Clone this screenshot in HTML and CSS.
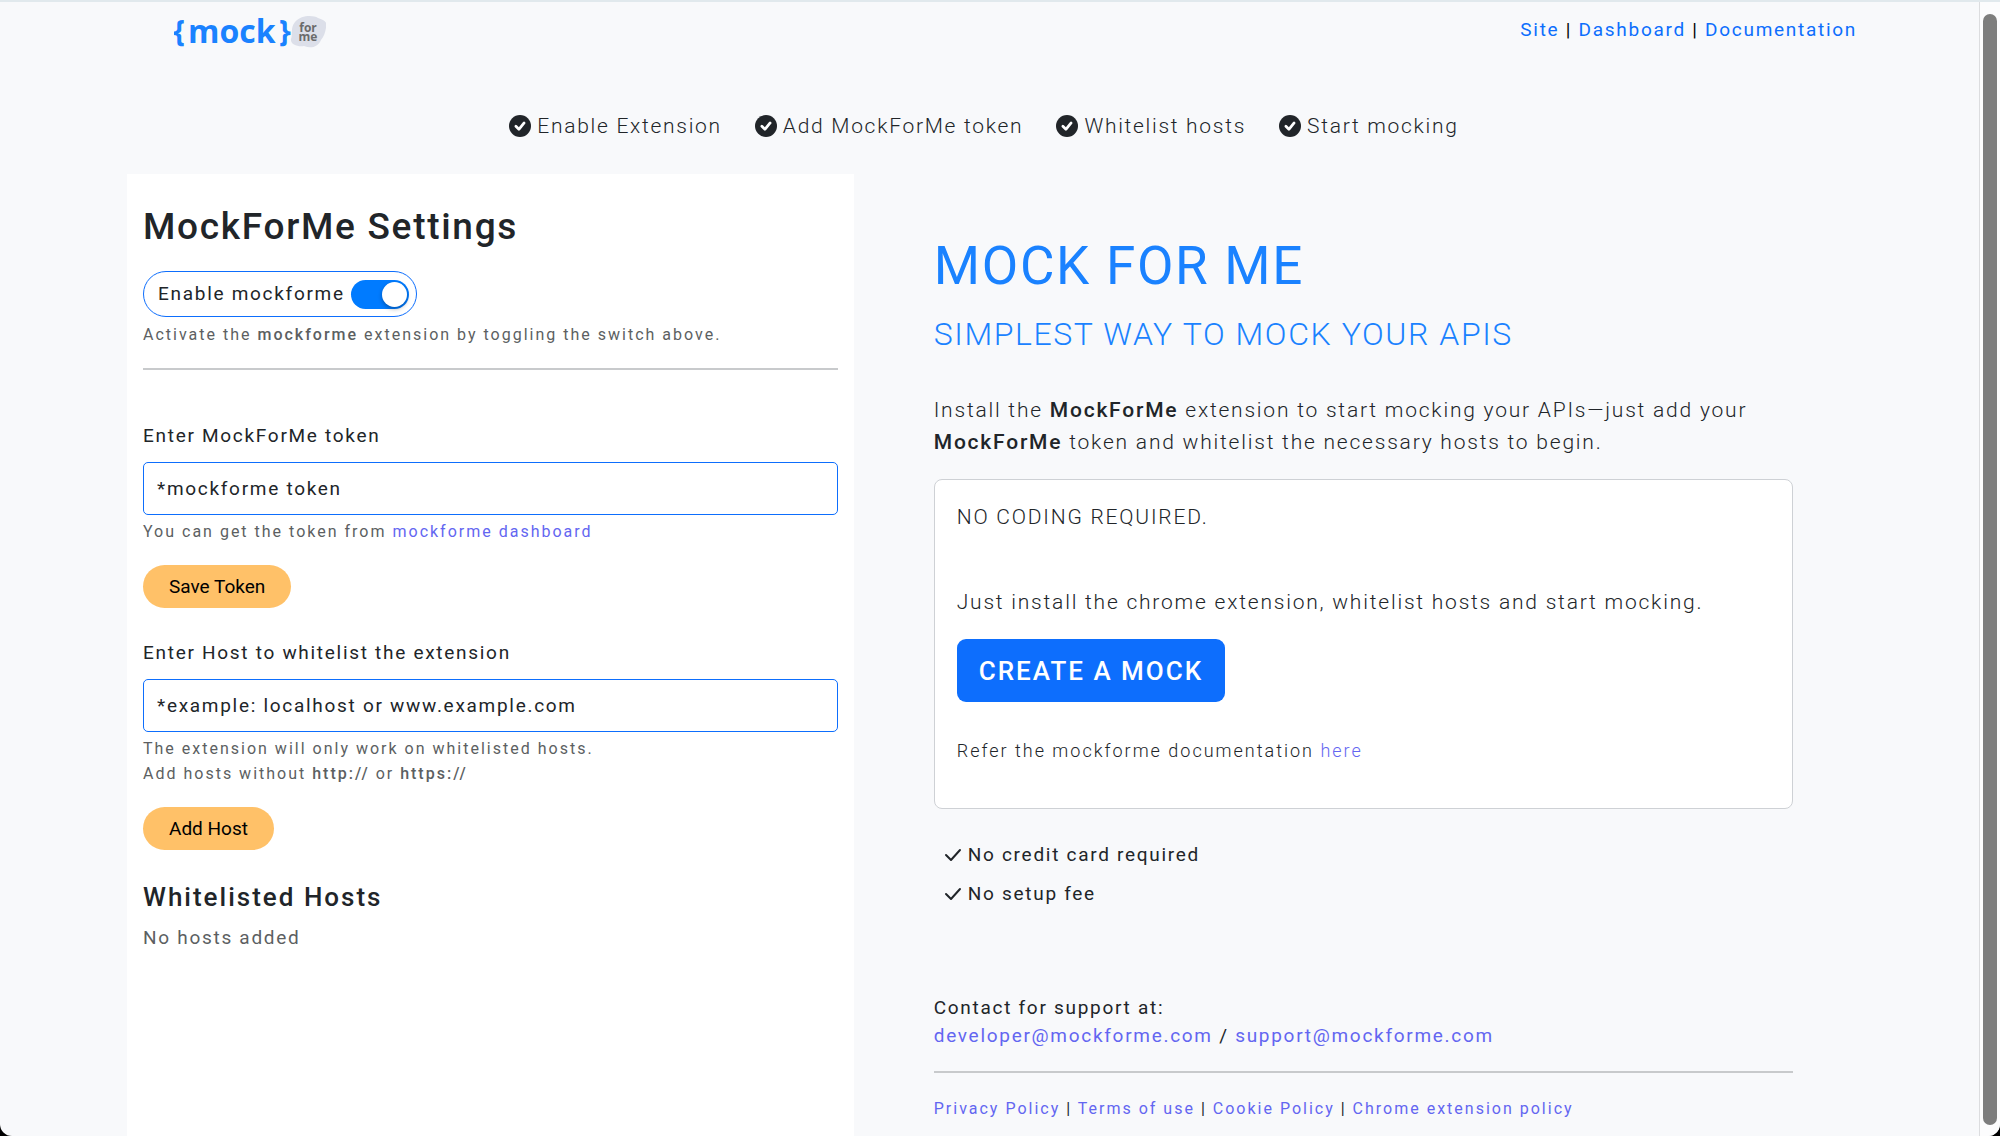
FILE: index.html
```html
<!DOCTYPE html>
<html lang="en">

<head>
    <meta charset="UTF-8">
    <meta name="viewport" content="width=device-width, initial-scale=1.0">
    <title>MockForMe</title>
    <link rel="stylesheet" href="styles.css">
</head>

<body>
    <div class="page">
        <header class="header">
            <a class="logo" href="#" aria-label="mock for me">
                <svg width="152" height="48" viewBox="0 -8 152 48">
                    <g class="logo-main">
                        <text x="-1" y="26">{</text>
                        <text class="logo-name" x="14" y="27">mock</text>
                        <text x="105" y="26">}</text>
                    </g>
                    <path class="logo-blob" d="M121 6C127 -1 139 -1 144 2C150 4 154 6 152 12C151 17 150 20 147 24C144 31 137 33 130 30C123 31 116 28 117 23C119 18 116 12 121 6Z" />
                    <g class="logo-small">
                        <text x="134" y="16">for</text>
                        <text x="134" y="25">me</text>
                    </g>
                </svg>
            </a>
            <nav class="nav">
                <a href="#">Site</a> | <a href="#">Dashboard</a> | <a href="#">Documentation</a>
            </nav>
        </header>

        <ul class="steps">
            <li><svg class="dot" viewBox="0 0 16 16"><circle cx="8" cy="8" r="8" /><path d="M5 8.2L7.2 10.4L11 5.8" /></svg>Enable Extension</li>
            <li><svg class="dot" viewBox="0 0 16 16"><circle cx="8" cy="8" r="8" /><path d="M5 8.2L7.2 10.4L11 5.8" /></svg>Add MockForMe token</li>
            <li><svg class="dot" viewBox="0 0 16 16"><circle cx="8" cy="8" r="8" /><path d="M5 8.2L7.2 10.4L11 5.8" /></svg>Whitelist hosts</li>
            <li><svg class="dot" viewBox="0 0 16 16"><circle cx="8" cy="8" r="8" /><path d="M5 8.2L7.2 10.4L11 5.8" /></svg>Start mocking</li>
        </ul>

        <main class="row">
            <section class="settings">
                <h1>MockForMe Settings</h1>
                <div class="switch">
                    <label for="enable">Enable mockforme</label>
                    <input type="checkbox" id="enable" checked>
                </div>
                <p class="help">Activate the <b>mockforme</b> extension by toggling the switch above.</p>
                <hr>

                <form class="form">
                    <label for="token">Enter MockForMe token</label>
                    <input type="text" id="token" placeholder="*mockforme token">
                    <p class="help">You can get the token from <a href="#">mockforme dashboard</a></p>
                    <button type="button" class="btn">Save Token</button>
                </form>

                <form class="form">
                    <label for="host">Enter Host to whitelist the extension</label>
                    <input type="text" id="host" placeholder="*example: localhost or www.example.com">
                    <p class="help">The extension will only work on whitelisted hosts.<br>Add hosts without <b>http://</b> or <b>https://</b></p>
                    <button type="button" class="btn">Add Host</button>
                </form>

                <h3>Whitelisted Hosts</h3>
                <p class="empty">No hosts added</p>
            </section>

            <section class="intro">
                <h1>MOCK FOR ME</h1>
                <h2>SIMPLEST WAY TO MOCK YOUR APIS</h2>
                <p class="lead">Install the <b>MockForMe</b> extension to start mocking your APIs—just add your <b>MockForMe</b> token and whitelist the necessary hosts to begin.</p>

                <div class="card">
                    <p class="lead">NO CODING REQUIRED.</p>
                    <p class="lead install">Just install the chrome extension, whitelist hosts and start mocking.</p>
                    <button type="button" class="create">CREATE A MOCK</button>
                    <p class="refer">Refer the mockforme documentation <a href="#">here</a></p>
                </div>

                <ul class="perks">
                    <li><svg class="tick" viewBox="0 0 18 14"><path d="M2 7L7 12L16 2" /></svg>No credit card required</li>
                    <li><svg class="tick" viewBox="0 0 18 14"><path d="M2 7L7 12L16 2" /></svg>No setup fee</li>
                </ul>

                <p class="contact">Contact for support at:<br>
                    <a href="#">developer@mockforme.com</a> / <a href="#">support@mockforme.com</a></p>
                <hr>
                <footer class="footer">
                    <a href="#">Privacy Policy</a> | <a href="#">Terms of use</a> | <a href="#">Cookie Policy</a> | <a href="#">Chrome extension policy</a>
                </footer>
            </section>
        </main>
    </div>
    <div class="scrollbar">
        <div class="thumb"></div>
    </div>
</body>

</html>
```

FILE: styles.css
```css
* {
    box-sizing: border-box;
}

html {
    background-color: #000;
}

body {
    margin: 0;
    min-height: 100vh;
    display: flex;
    overflow: hidden;
    border-top: 2px solid #e1e9ed;
    border-radius: 0 0 12px 12px;
    background-color: #f8f9fb;
    color: #212529;
    font-family: Roboto, "Liberation Sans", sans-serif;
    font-size: 19px;
    line-height: 28px;
    letter-spacing: 0.09em;
}

h1, h2, h3, p, ul {
    margin: 0;
    padding: 0;
}

ul {
    list-style: none;
}

a {
    color: #6366f1;
    text-decoration: none;
}

b {
    font-weight: 500;
}

hr {
    margin: 0;
    border: 0;
    border-top: 2px solid #c8cacc;
}

.page {
    flex: 1;
    display: flex;
    flex-direction: column;
}

.header {
    display: flex;
    justify-content: space-between;
    padding: 6px 122px 0 174px;
}

.logo {
    height: 48px;
}

.logo-main {
    fill: #1a82ff;
    font: 700 30px "Open Sans", sans-serif;
    letter-spacing: 0;
}

.logo-name {
    font-size: 32px;
}

.logo-blob {
    fill: #dcdfe9;
}

.logo-small {
    fill: #6b6b6b;
    font: 700 12px "Open Sans", sans-serif;
    letter-spacing: 0;
    text-anchor: middle;
}

.nav {
    padding-top: 8px;
    color: #000;
}

.nav a {
    color: #0d6efd;
}

.steps {
    display: flex;
    justify-content: center;
    margin-top: 54px;
    font-size: 21px;
    font-weight: 300;
    line-height: 32px;
}

.steps li {
    display: flex;
    align-items: center;
    gap: 6px;
    padding: 0 22px 0 11px;
}

.dot {
    width: 22px;
    height: 22px;
    fill: #212529;
}

.dot path {
    fill: none;
    stroke: #fff;
    stroke-width: 2;
    stroke-linecap: round;
    stroke-linejoin: round;
}

.row {
    flex: 1;
    display: grid;
    grid-template-columns: 8fr 11fr;
    margin: 32px 126px 0 127px;
}

.settings {
    padding: 31px 16px 0;
    background-color: #fff;
}

.settings h1 {
    font-size: 37px;
    font-weight: 500;
    line-height: 44px;
}

.switch {
    display: inline-flex;
    align-items: center;
    gap: 6px;
    margin: 22px 0 5px;
    height: 46px;
    padding: 0 7px 0 14px;
    border: 1px solid #0d6efd;
    border-radius: 23px;
}

.switch input {
    appearance: none;
    display: flex;
    align-items: center;
    justify-content: flex-end;
    width: 58px;
    height: 29px;
    margin: 0;
    padding: 2px;
    border-radius: 15px;
    background-color: #007bff;
}

.switch input::before {
    content: "";
    width: 25px;
    height: 25px;
    border-radius: 50%;
    background-color: #fff;
    box-shadow: 0 2px 4px rgba(0, 0, 0, 0.3);
}

.switch input:not(:checked) {
    justify-content: flex-start;
    background-color: #ccc;
}

.help {
    color: #5c5f62;
    font-size: 16px;
    line-height: 25px;
    letter-spacing: 2px;
}

.settings hr {
    margin: 21px 0 34px;
}

.form {
    display: flex;
    flex-direction: column;
    align-items: flex-start;
    padding-top: 18px;
}

.form input {
    width: 100%;
    height: 53px;
    margin: 12px 0 4px;
    padding: 0 13px;
    border: 1px solid #0d6efd;
    border-radius: 5px;
    background-color: #fff;
    font: inherit;
    letter-spacing: inherit;
}

.form input::placeholder {
    color: #212529;
}

.btn {
    height: 43px;
    margin: 21px 0 13px;
    padding: 0 26px;
    border: 0;
    border-radius: 22px;
    background-color: #ffc168;
    color: #000;
    font-family: inherit;
    font-size: 19px;
}

.settings h3 {
    margin-top: 18px;
    font-size: 26px;
    font-weight: 500;
    line-height: 32px;
    letter-spacing: 2px;
}

.empty {
    margin-top: 11px;
    color: #5c5f62;
}

.intro {
    padding: 60px 60px 0 80px;
}

.intro h1 {
    color: #1a82ff;
    font-size: 53px;
    font-weight: 400;
    line-height: 64px;
}

.intro h2 {
    margin: 17px 0 41px;
    color: #1a82ff;
    font-size: 32px;
    font-weight: 300;
    line-height: 38px;
    letter-spacing: 0.05em;
}

.lead {
    font-size: 21px;
    font-weight: 300;
    line-height: 32px;
    letter-spacing: 0.085em;
}

.card {
    margin-top: 21px;
    padding: 21px 22px 43px;
    border: 1px solid #ced1d5;
    border-radius: 8px;
    background-color: #fff;
}

.install {
    margin: 53px 0 21px;
}

.create {
    height: 63px;
    padding: 0 22px;
    border: 0;
    border-radius: 9px;
    background-color: #0d6efd;
    color: #fff;
    font-family: inherit;
    font-size: 26px;
    font-weight: 500;
    letter-spacing: 2px;
}

.refer {
    margin-top: 35px;
    font-size: 18px;
    font-weight: 300;
    letter-spacing: 2px;
}

.perks {
    margin-top: 32px;
    padding-left: 10px;
}

.perks li {
    display: flex;
    align-items: center;
    gap: 6px;
    margin-bottom: 11px;
}

.tick {
    width: 18px;
    height: 14px;
    fill: none;
    stroke: #212529;
    stroke-width: 2;
    stroke-linecap: round;
    stroke-linejoin: round;
}

.contact {
    margin: 86px 0 21px;
}

.footer {
    margin-top: 22px;
    font-size: 16px;
    letter-spacing: 2px;
}

.scrollbar {
    width: 21px;
    padding: 12px 3px 11px;
    border-left: 1px solid #dcdddf;
    background-color: #fcfcfd;
    display: flex;
}

.thumb {
    flex: 1;
    border-radius: 7px;
    background-color: #7d7d7d;
}
```
